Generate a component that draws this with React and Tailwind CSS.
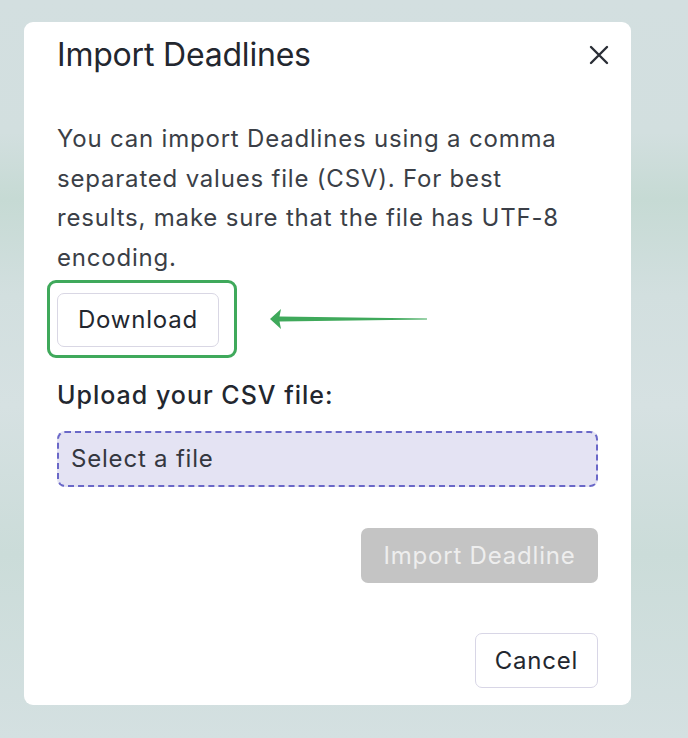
export default function App() {
    return (
        <div
            className="min-h-[738px] w-full pt-[22px] pb-[33px] pl-[24px] pr-[57px] bg-[linear-gradient(180deg,#d3dfe0_0%,#d2dfdf_18%,#c6dad4_27%,#d2dfdf_40%,#d6e1e2_55%,#cbdcd9_75%,#d4e0e1_100%)]"
            style={{ fontFamily: 'Inter, "Noto Sans", sans-serif' }}
        >
            {/* Modal card */}
            <div className="w-[607px] h-[683px] bg-white rounded-[9px] px-[33px] pt-[17px] flex flex-col tracking-[0.8px]">
                {/* Header */}
                <div className="flex items-center justify-between h-[32px]">
                    <h1 className="text-[32px] leading-none text-[#23272f] tracking-[-0.2px]">Import Deadlines</h1>
                    <button className="-mr-[11px]">
                        <svg width="20" height="20" viewBox="0 0 20 20">
                            <path d="M2 2 L18 18 M18 2 L2 18" stroke="#2a2e36" strokeWidth="2.4" strokeLinecap="round" />
                        </svg>
                    </button>
                </div>

                {/* Description */}
                <p className="mt-[48px] w-[520px] text-[24px] leading-[39.5px] text-[#3b3f47]">
                    You can import Deadlines using a comma separated values file (CSV). For best results, make sure that the file has UTF-8 encoding.
                </p>

                {/* Download button with highlight */}
                <div className="mt-[3px] flex items-center">
                    <div className="-ml-[10px] border-[3px] border-[#3fa95b] rounded-[9px] pl-[7px] pr-[15px] pt-[10px] pb-[8px]">
                        <button className="h-[54px] w-[162px] border border-[#d9d7e4] rounded-[7px] text-[24px] text-[#23272f] bg-white tracking-[0.8px]">
                            Download
                        </button>
                    </div>
                    <svg className="ml-[33px]" width="160" height="22" viewBox="0 0 160 22">
                        <path d="M0 11 L11 1 L9.5 8.4 L157 10.6 L157 11.4 L9.5 13.6 L11 21 Z" fill="#3fa95b" />
                    </svg>
                </div>

                {/* Upload */}
                <label className="mt-[21px] text-[25px] leading-[32px] font-medium text-[#23272f] tracking-[1px]">Upload your CSV file:</label>
                <div className="mt-[20px] h-[56px] w-[541px] rounded-[8px] border-[2px] border-dashed border-[#6a68c8] bg-[#e4e3f3] flex items-center px-[12px]">
                    <span className="text-[24px] text-[#34373f]">Select a file</span>
                </div>

                {/* Import button */}
                <div className="mt-[41px] flex justify-end w-[541px]">
                    <button className="h-[55px] w-[237px] rounded-[7px] bg-[#c4c4c4] text-[24px] text-[#eeeeee] tracking-[0.8px]">
                        Import Deadline
                    </button>
                </div>

                {/* Cancel */}
                <div className="mt-[50px] flex justify-end w-[541px]">
                    <button className="h-[55px] w-[123px] rounded-[7px] border border-[#d8d6e6] bg-white text-[24px] text-[#23272f] tracking-[0.8px]">
                        Cancel
                    </button>
                </div>
            </div>
        </div>
    );
}
